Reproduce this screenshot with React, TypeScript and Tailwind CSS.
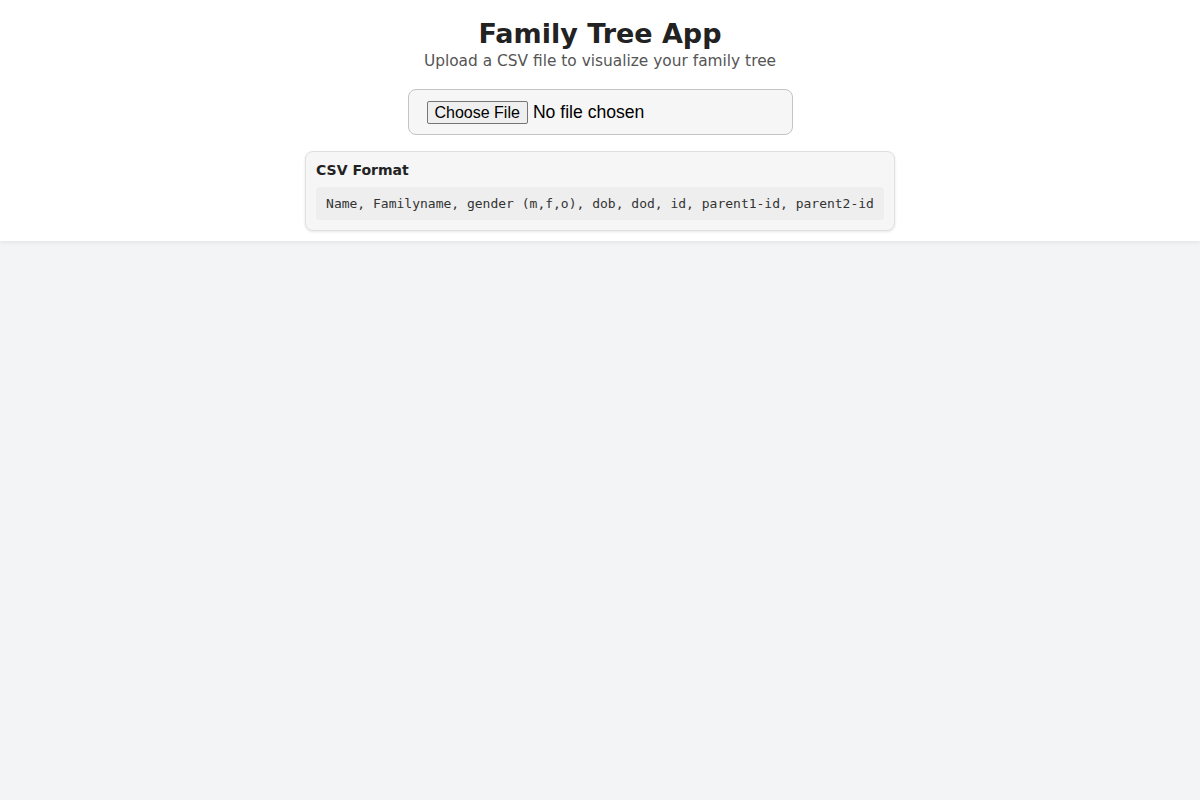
export default function App() {
  return (
    <div className="min-h-screen bg-[#f3f4f6] font-['DejaVu_Sans',sans-serif] text-[#222]">
      <header className="flex flex-col items-center bg-white px-4 pt-[18px] pb-[10px] shadow-[0_2px_4px_rgba(0,0,0,0.06)]">
        <h1 className="text-[27px] leading-[32px] font-bold text-[#222]">Family Tree App</h1>
        <p className="mt-[1px] text-[15.4px] leading-[20px] text-[#555]">Upload a CSV file to visualize your family tree</p>

        <div className="mt-[18px] w-[385px] rounded-lg border border-[#c4c4c4] bg-[#f6f6f6] px-[18px] py-[10px]">
          <input
            type="file"
            accept=".csv"
            className="block font-['Liberation_Sans',Arial,sans-serif] text-[17.6px] leading-[24px] text-black file:mr-[5px] file:rounded-[2px] file:border file:border-[#767676] file:bg-[#efefef] file:px-[7px] file:py-[1px] file:text-[16px] file:leading-[19px] file:text-black"
          />
        </div>

        <div className="mt-[16px] w-fit rounded-lg border border-[#e0e0e0] bg-[#f6f6f6] p-[10px] shadow-[0_1px_3px_rgba(0,0,0,0.1)]">
          <h3 className="text-[14px] leading-[17px] font-bold text-[#222]">CSV Format</h3>
          <code className="mt-[8px] block rounded bg-[#eeeeee] px-[10px] py-[8px] font-['DejaVu_Sans_Mono',monospace] text-[13px] leading-[17px] text-[#333]">
            Name, Familyname, gender (m,f,o), dob, dod, id, parent1-id, parent2-id
          </code>
        </div>
      </header>
    </div>
  );
}
